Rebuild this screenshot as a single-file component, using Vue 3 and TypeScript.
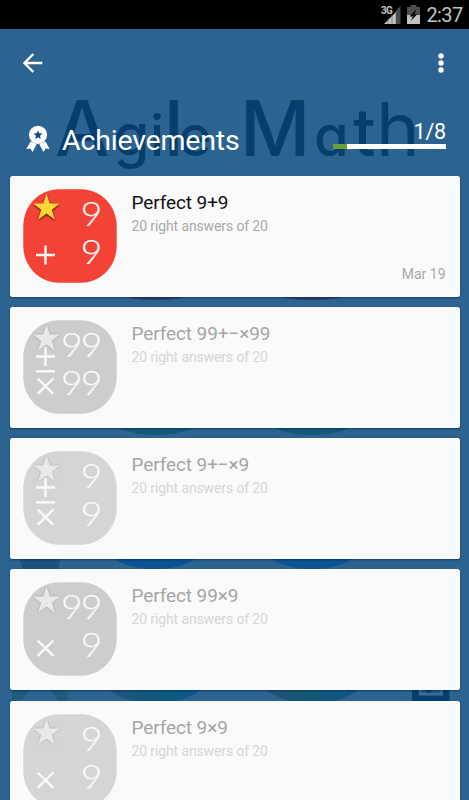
<script setup lang="ts">
interface Achievement {
  title: string
  top: string
  bottom: string
  signs: string[]
  shade: string
  date?: string
}

const achievements: Achievement[] = [
  { title: 'Perfect 9+9', top: '9', bottom: '9', signs: ['plus'], shade: 'red', date: 'Mar 19' },
  { title: 'Perfect 99+−×99', top: '99', bottom: '99', signs: ['high-plus', 'minus', 'times'], shade: 'dark' },
  { title: 'Perfect 9+−×9', top: '9', bottom: '9', signs: ['high-plus', 'minus', 'times'], shade: 'light' },
  { title: 'Perfect 99×9', top: '99', bottom: '9', signs: ['times'], shade: 'dark' },
  { title: 'Perfect 9×9', top: '9', bottom: '9', signs: ['times'], shade: 'light' },
]

const signPaths: Record<string, string> = {
  plus: 'M13 66h19M22.5 56.5v19',
  'high-plus': 'M13 36.5h19M22.5 27v19',
  minus: 'M13 51.3h19',
  times: 'M14.7 58.5l15.6 15.4M30.3 58.5L14.7 73.9',
}

const digitX = (value: string): string => (value.length === 2 ? '33.6 51.2' : '51.2')
</script>

<template>
  <div class="screen">
    <svg class="backdrop" viewBox="0 0 469 800" aria-hidden="true">
      <defs>
        <linearGradient id="mixLeft"><stop offset="0" stop-color="#29507a" /><stop offset=".5" stop-color="#0f5a7c" /><stop offset="1" stop-color="#0a5794" /></linearGradient>
        <linearGradient id="mixRight"><stop offset="0" stop-color="#2b4d77" /><stop offset=".5" stop-color="#105774" /><stop offset="1" stop-color="#0a5594" /></linearGradient>
      </defs>
      <text class="wordmark" y="155.5">
        <tspan class="cap" x="55">A</tspan><tspan class="gee" x="113.500">g</tspan><tspan class="mid" x="150">i</tspan><tspan class="cap" x="164">l</tspan><tspan class="low" x="178.500">e</tspan>
        <tspan class="cap" x="240">M</tspan><tspan class="low" x="314">a</tspan><tspan class="tee" x="353">t</tspan><tspan class="aitch" x="376">h</tspan>
      </text>
      <g fill="#26446f"><ellipse cx="156" cy="292" rx="38" ry="8" /><ellipse cx="312" cy="292" rx="38" ry="8" /></g>
      <g fill="#12587a"><ellipse cx="156" cy="418.500" rx="45" ry="16.500" /><ellipse cx="312" cy="418.500" rx="45" ry="16.500" /></g>
      <g fill="#0b5393"><ellipse cx="155" cy="545" rx="50" ry="24" /><ellipse cx="312" cy="545" rx="50" ry="24" /></g>
      <ellipse cx="155" cy="671" rx="56" ry="33" fill="url(#mixLeft)" />
      <ellipse cx="312" cy="671" rx="56" ry="33" fill="url(#mixRight)" />
      <path d="M18.500 555h43l-4.500 18H24z" fill="#1b5180" />
      <path d="M12 685h24l-17.500 17H12zM45 685h24q0 9-2.500 17H60z" fill="#205b7b" />
      <path d="M412 680h37.500v24H412z" fill="#063f72" />
      <path d="M419 680h24v15.500h-24z" fill="#416e95" />
      <path d="M421.500 680h19v13h-19z" fill="#24598a" />
      <path d="M423.500 689h10l-5 4.500z" fill="#063f72" />
    </svg>

    <header class="status">
      <svg class="signal" viewBox="0 0 21 20">
        <path d="M4 19L16 7v12z" fill="#c4c4c4" />
        <path d="M16 5.500L20.500 1v18H16z" fill="#4b4b4b" />
        <path d="M8 14v5M12 10v9M16 6v13" stroke="#666" stroke-width=".7" />
        <text x="1" y="9" class="network">3G</text>
      </svg>
      <svg class="battery" viewBox="0 0 13 19">
        <path d="M3.500 0h6v2H13v17H0V2h3.500z" fill="#4d4d4d" />
        <path d="M0 10h13v9H0z" fill="#c0c0c0" />
        <path d="M9.500 4L2.500 11.500h3.300L3.700 16l6.600-6.700H7.500z" fill="#080808" />
      </svg>
      <span class="clock">2:37</span>
    </header>

    <nav class="toolbar">
      <svg class="back" viewBox="0 0 20 20"><path d="M19.300 10H2M10.300 1L1.500 10l8.800 9" /></svg>
      <svg class="more" viewBox="0 0 6 20"><circle cx="3" cy="3" r="2.700" /><circle cx="3" cy="10" r="2.700" /><circle cx="3" cy="17" r="2.700" /></svg>
    </nav>

    <section class="heading">
      <svg class="medal" viewBox="0 0 24 28">
        <path d="M4.600 16.500L.3 24l4-.5 2.200 3.500 4.300-8zM19.400 16.500l4.300 7.500-4-.5-2.200 3.500-4.300-8z" fill="#fff" />
        <circle cx="12" cy="9.800" r="9.100" fill="#fff" />
        <path d="M12 5.300l1.200 3 3.300.3-2.500 2.100.8 3.200-2.800-1.700-2.800 1.700.8-3.200-2.500-2.100 3.300-.3z" fill="#124a7c" />
      </svg>
      <h1>Achievements</h1>
      <div class="progress">
        <span class="count">1/8</span>
        <div class="track"><div class="fill"></div></div>
      </div>
    </section>

    <main class="list">
      <article v-for="item in achievements" :key="item.title" class="card" :class="{ locked: !item.date }">
        <svg class="badge" :class="item.shade" viewBox="0 0 94 94">
          <path class="tile" d="M36 .3H58C78 .3 93.700 17 93.700 37V57C93.700 77 78 93.700 58 93.700H36C16 93.700.3 77 .3 57V37C.3 17 16 .3 36 .3Z" />
          <path v-for="sign in item.signs" :key="sign" class="sign" :d="signPaths[sign]" />
          <path class="star" d="M23.500 4.800L26.800 14.400L36.800 14.600L28.800 20.700L31.700 30.400L23.500 24.600L15.300 30.400L18.200 20.700L10.200 14.600L20.200 14.400Z" />
          <g transform="scale(1.13 1)">
            <text class="digits" :x="digitX(item.top)" y="37.500">{{ item.top }}</text>
            <text class="digits" :x="digitX(item.bottom)" y="75.200">{{ item.bottom }}</text>
          </g>
        </svg>
        <div class="info">
          <h2>{{ item.title }}</h2>
          <p>20 right answers of 20</p>
          <time v-if="item.date">{{ item.date }}</time>
        </div>
      </article>
    </main>
  </div>
</template>

<style>
body {
  margin: 0;
  overflow: hidden;
}
</style>

<style scoped>
.screen {
  position: relative;
  width: 469px;
  height: 800px;
  overflow: hidden;
  background: #2c6391;
  font-family: Roboto, 'Liberation Sans', sans-serif;
}
.backdrop {
  position: absolute;
  inset: 0;
  width: 469px;
  height: 800px;
}
.wordmark {
  fill: #063f6e;
  font-family: Inter, sans-serif;
  font-weight: 500;
  font-feature-settings: 'cv11';
}
.cap { font-size: 77px; }
.mid { font-size: 56px; }
.tee { font-size: 66px; }
.aitch { font-size: 74px; font-weight: 400; }
.gee { font-size: 58px; }
.low { font-size: 56px; }
.status {
  position: relative;
  display: flex;
  align-items: center;
  justify-content: flex-end;
  box-sizing: border-box;
  height: 29px;
  padding-right: 7px;
  background: #000;
}
.signal { width: 21px; height: 20px; margin-right: 6px; }
.network { fill: #c4c4c4; font: bold 10px Roboto, sans-serif; letter-spacing: -0.800px; }
.battery { width: 13px; height: 19px; margin-right: 6px; }
.clock {
  color: #c2c2c2;
  font-size: 20px;
  line-height: 29px;
  letter-spacing: -0.600px;
  margin-right: -0.600px;
  padding-top: 2px;
}
.toolbar {
  position: relative;
  display: flex;
  align-items: center;
  justify-content: space-between;
  height: 67px;
  padding: 0 25px 0 23px;
}
.back { width: 20px; height: 20px; fill: none; stroke: #fff; stroke-width: 2.400; }
.more { width: 6px; height: 20px; fill: #fff; }
.heading {
  position: relative;
  display: flex;
  align-items: flex-start;
  box-sizing: border-box;
  height: 79.500px;
  padding: 24px 23px 0 26px;
}
.medal { width: 24px; height: 28px; margin-top: 5px; }
h1 {
  margin: 3px 0 0 12px;
  color: #fff;
  font-size: 28.500px;
  font-weight: 400;
  line-height: 36px;
  letter-spacing: -0.180px;
}
.progress {
  display: flex;
  flex-direction: column;
  width: 113px;
  margin-left: auto;
}
.count { color: #fff; font-size: 21.500px; line-height: 24px; text-align: right; letter-spacing: -0.200px; }
.track { height: 5px; background: #fff; }
.fill { width: 14px; height: 5px; background: #689f38; }
.list {
  position: relative;
  display: flex;
  flex-direction: column;
  gap: 10.250px;
  padding: 0 9.500px 0 10px;
}
.card {
  display: flex;
  flex: none;
  box-sizing: border-box;
  height: 121px;
  padding: 13px;
  border-radius: 2.500px;
  background: #fafafa;
  box-shadow: 0 1px 2px rgba(0, 30, 60, 0.5);
}
.badge { flex: none; width: 94px; height: 94px; }
.red .tile { fill: #f44336; }
.dark .tile { fill: #cdcdcd; }
.light .tile { fill: #d5d5d5; }
.sign { fill: none; stroke: #fafafa; stroke-width: 2.400; }
.star { fill: #e9e9e9; filter: drop-shadow(0 0.500px 0.800px rgba(0, 0, 0, 0.2)); }
.red .star { fill: #fdd835; filter: drop-shadow(0 1px 1px rgba(0, 0, 0, 0.7)); }
.digits {
  fill: #fafafa;
  stroke: #fafafa;
  stroke-width: 0.200;
  font-family: Lato, sans-serif;
  font-size: 33px;
  font-weight: 300;
}
.info {
  display: flex;
  flex: 1;
  flex-direction: column;
  margin-left: 14.500px;
}
h2 {
  margin: 2px 0 0;
  color: #111;
  font-size: 19px;
  font-weight: 400;
  line-height: 24px;
  letter-spacing: -0.100px;
}
p {
  margin: 1px 0 0;
  color: #a9a9a9;
  font-size: 14px;
  line-height: 20px;
  letter-spacing: -0.120px;
}
time {
  align-self: flex-end;
  margin: auto 1px 1px 0;
  color: #a9a9a9;
  font-size: 14px;
  line-height: 18px;
}
.locked h2 { color: #a5a5a5; }
.locked p { color: #d6d6d6; }
</style>
